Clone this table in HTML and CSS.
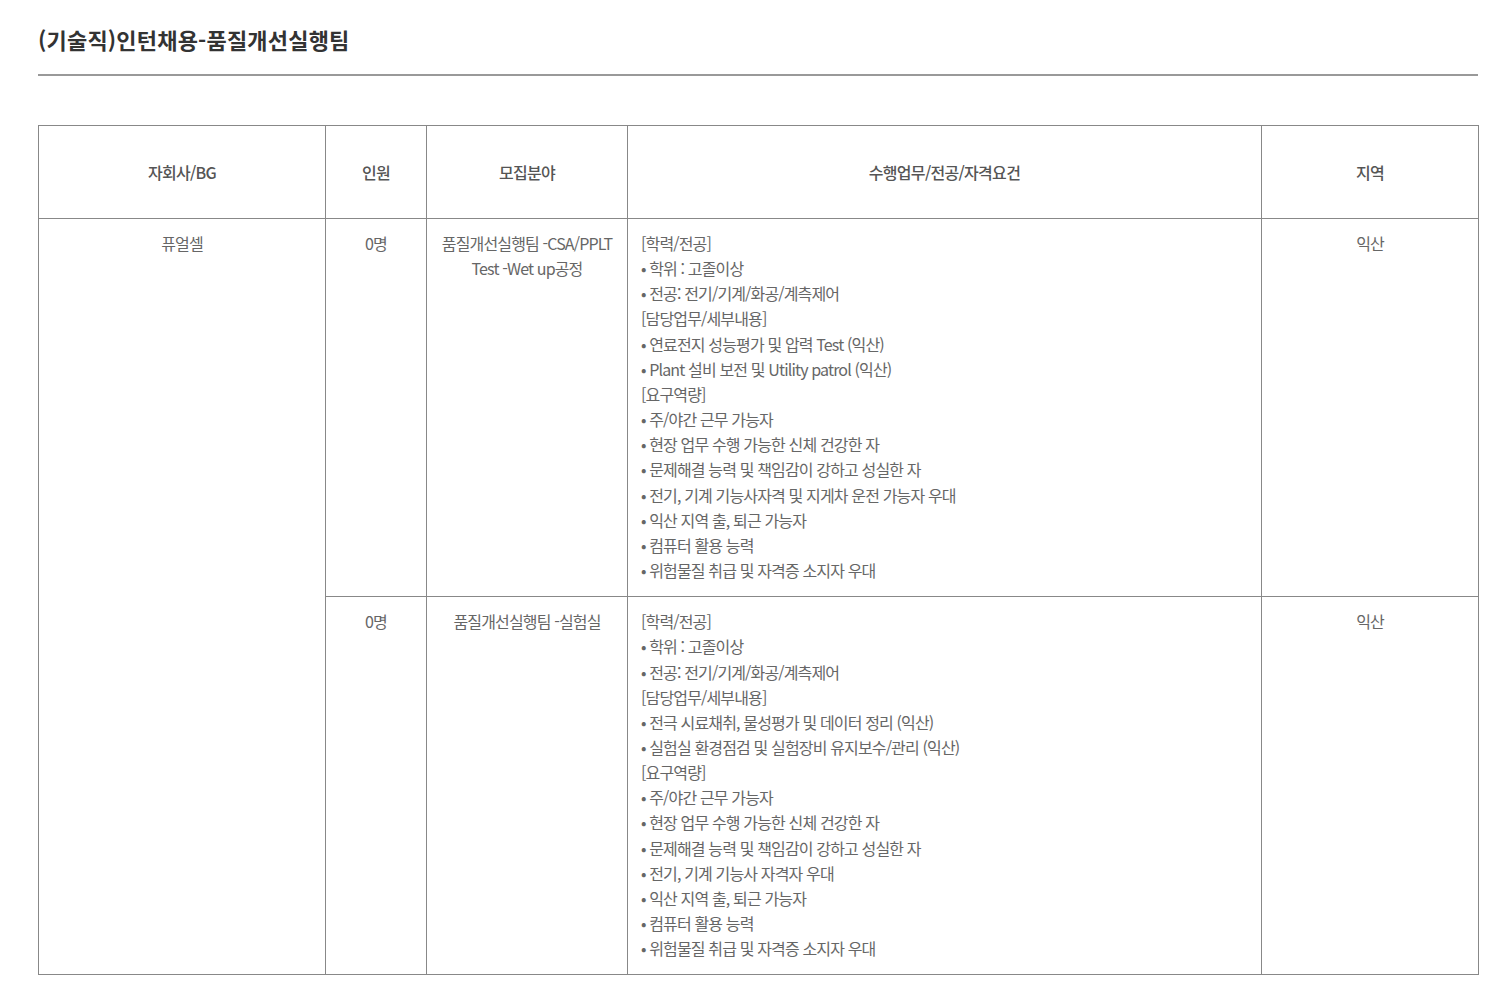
FILE: index.html
```html
<!DOCTYPE html>
<html lang="ko">
<head>
<meta charset="utf-8">
<title>(기술직)인턴채용-품질개선실행팀</title>
<link rel="stylesheet" href="styles.css">
</head>
<body>
<div class="page">
  <h1 class="title">(기술직)인턴채용-품질개선실행팀</h1>
  <table class="jobs">
    <colgroup>
      <col class="c1"><col class="c2"><col class="c3"><col class="c4"><col class="c5">
    </colgroup>
    <thead>
      <tr>
        <th>자회사/BG</th>
        <th>인원</th>
        <th>모집분야</th>
        <th>수행업무/전공/자격요건</th>
        <th>지역</th>
      </tr>
    </thead>
    <tbody>
      <tr>
        <td class="center" rowspan="2">퓨얼셀</td>
        <td class="center">0명</td>
        <td class="center">품질개선실행팀 -CSA/PPLT<br>Test -Wet up공정</td>
        <td class="desc">[학력/전공]<br>• 학위 : 고졸이상<br>• 전공: 전기/기계/화공/계측제어<br>[담당업무/세부내용]<br>• 연료전지 성능평가 및 압력 Test (익산)<br>• Plant 설비 보전 및 Utility patrol (익산)<br>[요구역량]<br>• 주/야간 근무 가능자<br>• 현장 업무 수행 가능한 신체 건강한 자<br>• 문제해결 능력 및 책임감이 강하고 성실한 자<br>• 전기, 기계 기능사자격 및 지게차 운전 가능자 우대<br>• 익산 지역 출, 퇴근 가능자<br>• 컴퓨터 활용 능력<br>• 위험물질 취급 및 자격증 소지자 우대</td>
        <td class="center">익산</td>
      </tr>
      <tr>
        <td class="center">0명</td>
        <td class="center">품질개선실행팀 -실험실</td>
        <td class="desc">[학력/전공]<br>• 학위 : 고졸이상<br>• 전공: 전기/기계/화공/계측제어<br>[담당업무/세부내용]<br>• 전극 시료채취, 물성평가 및 데이터 정리 (익산)<br>• 실험실 환경점검 및 실험장비 유지보수/관리 (익산)<br>[요구역량]<br>• 주/야간 근무 가능자<br>• 현장 업무 수행 가능한 신체 건강한 자<br>• 문제해결 능력 및 책임감이 강하고 성실한 자<br>• 전기, 기계 기능사 자격자 우대<br>• 익산 지역 출, 퇴근 가능자<br>• 컴퓨터 활용 능력<br>• 위험물질 취급 및 자격증 소지자 우대</td>
        <td class="center">익산</td>
      </tr>
    </tbody>
  </table>
</div>
</body>
</html>
```
FILE: styles.css
```css
html, body {
  margin: 0;
  padding: 0;
  background: #fff;
}
body {
  font-family: "Noto Sans CJK KR", "Noto Sans", sans-serif;
  color: #666;
}
.page {
  width: 1440px;
  padding-left: 38px;
}
.title {
  margin: 0;
  padding: 24px 0 20px;
  font-size: 22px;
  line-height: 30px;
  font-weight: 700;
  color: #333;
  letter-spacing: 0.2px;
  border-bottom: 2px solid #999;
}
.jobs {
  margin-top: 49px;
  width: 1440px;
  border-collapse: collapse;
  table-layout: fixed;
  font-size: 16px;
  letter-spacing: -0.85px;
}
.c1 { width: 287px; }
.c2 { width: 101px; }
.c3 { width: 201px; }
.c4 { width: 634px; }
.c5 { width: 217px; }
.jobs th, .jobs td {
  border: 1px solid #888;
}
.jobs th {
  height: 92px;
  padding: 0;
  font-weight: 500;
  color: #555;
  letter-spacing: -0.7px;
  text-align: center;
  vertical-align: middle;
}
.jobs td {
  padding: 12px 12px 13px;
  line-height: 25.15px;
  vertical-align: top;
  color: #666;
}
.jobs td.center {
  text-align: center;
}
.jobs td.desc {
  padding-left: 13px;
  text-align: left;
}
```
